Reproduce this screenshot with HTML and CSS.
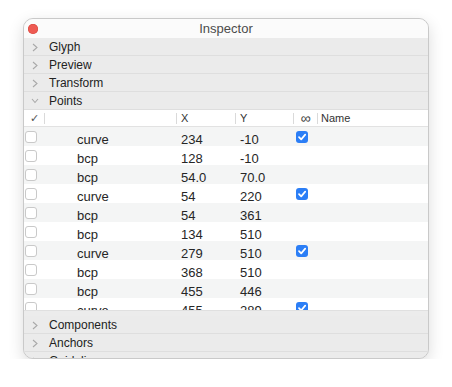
FILE: index.html
```html
<!DOCTYPE html>
<html lang="en">
<head>
    <meta charset="UTF-8">
    <meta name="viewport" content="width=device-width, initial-scale=1.0">
    <title>Inspector</title>
    <link rel="stylesheet" href="styles.css">
</head>
<body>
    <div class="window">
        <div class="titlebar">
            <span class="close"></span>
            <span class="title">Inspector</span>
        </div>

        <div class="section"><svg class="chev" viewBox="0 0 6 9"><polyline points="1,1 5,4.5 1,8"/></svg>Glyph</div>
        <div class="section"><svg class="chev" viewBox="0 0 6 9"><polyline points="1,1 5,4.5 1,8"/></svg>Preview</div>
        <div class="section"><svg class="chev" viewBox="0 0 6 9"><polyline points="1,1 5,4.5 1,8"/></svg>Transform</div>
        <div class="section"><svg class="chev down" viewBox="0 0 8 6"><polyline points="1,1 4,4.5 7,1"/></svg>Points</div>

        <div class="table">
            <div class="row head">
                <div class="cell mark">✓</div>
                <div class="cell"></div>
                <div class="cell">X</div>
                <div class="cell">Y</div>
                <div class="cell mark inf">∞</div>
                <div class="cell last">Name</div>
            </div>
            <div class="rows">
                <div class="row"><span class="box"></span><span class="type">curve</span><span>234</span><span>-10</span><span class="box on"></span><span></span></div>
                <div class="row"><span class="box"></span><span class="type">bcp</span><span>128</span><span>-10</span><span></span><span></span></div>
                <div class="row"><span class="box"></span><span class="type">bcp</span><span>54.0</span><span>70.0</span><span></span><span></span></div>
                <div class="row"><span class="box"></span><span class="type">curve</span><span>54</span><span>220</span><span class="box on"></span><span></span></div>
                <div class="row"><span class="box"></span><span class="type">bcp</span><span>54</span><span>361</span><span></span><span></span></div>
                <div class="row"><span class="box"></span><span class="type">bcp</span><span>134</span><span>510</span><span></span><span></span></div>
                <div class="row"><span class="box"></span><span class="type">curve</span><span>279</span><span>510</span><span class="box on"></span><span></span></div>
                <div class="row"><span class="box"></span><span class="type">bcp</span><span>368</span><span>510</span><span></span><span></span></div>
                <div class="row"><span class="box"></span><span class="type">bcp</span><span>455</span><span>446</span><span></span><span></span></div>
                <div class="row"><span class="box"></span><span class="type">curve</span><span>455</span><span>289</span><span class="box on"></span><span></span></div>
            </div>
        </div>
        <div class="split"></div>

        <div class="section"><svg class="chev" viewBox="0 0 6 9"><polyline points="1,1 5,4.5 1,8"/></svg>Components</div>
        <div class="section"><svg class="chev" viewBox="0 0 6 9"><polyline points="1,1 5,4.5 1,8"/></svg>Anchors</div>
        <div class="section"><svg class="chev" viewBox="0 0 6 9"><polyline points="1,1 5,4.5 1,8"/></svg>Guidelines</div>
    </div>
</body>
</html>
```

FILE: styles.css
```css
body {
    margin: 0;
    padding: 0;
    background-color: #ffffff;
    font-family: "Liberation Sans", Arial, sans-serif;
    color: #262626;
}
.window {
    margin: 18px 0 0 23px;
    width: 406px;
    height: 341px;
    box-sizing: border-box;
    border: 1px solid #c9c9c9;
    border-radius: 10px;
    overflow: hidden;
    background-color: #ececec;
    box-shadow: 0 5px 16px rgba(0,0,0,0.14);
    display: flex;
    flex-direction: column;
}
.titlebar {
    flex: 0 0 19px;
    display: grid;
    grid-template-columns: 20px 1fr 20px;
    align-items: center;
    background-color: #fbfbfb;
}
.close {
    width: 10px;
    height: 10px;
    margin-left: 4px;
    margin-top: 1px;
    border-radius: 50%;
    background-color: #ee5a52;
    box-shadow: inset 0 0 0 0.5px #d5443c;
}
.title {
    text-align: center;
    font-size: 13px;
    color: #4b4b4b;
}
.section {
    flex: 0 0 18px;
    box-sizing: border-box;
    display: flex;
    align-items: center;
    padding-left: 8px;
    padding-top: 1px;
    font-size: 12px;
    color: #222;
    background-color: #ebebeb;
    border-bottom: 1px solid #dedede;
}
.chev {
    width: 6px;
    height: 9px;
    margin-right: 11px;
    fill: none;
    stroke: #a9a9a9;
    stroke-width: 1.1;
}
.chev.down {
    width: 8px;
    height: 6px;
    margin-left: -1px;
    margin-right: 10px;
}
.table {
    flex: 0 0 200px;
    display: flex;
    flex-direction: column;
    background-color: #ffffff;
    overflow: hidden;
}
.row {
    display: grid;
    grid-template-columns: 21px 132px 59px 58px 24px 1fr;
    align-items: center;
    height: 19px;
    font-size: 13px;
}
.row.head {
    flex: 0 0 17px;
    height: 17px;
    box-sizing: border-box;
    border-bottom: 1px solid #e2e2e2;
    font-size: 11px;
    color: #333;
}
.head .cell {
    height: 11px;
    line-height: 11px;
    padding-left: 4px;
    border-right: 1px solid #dadada;
}
.head .mark {
    padding-left: 0;
    text-align: center;
    color: #555;
}
.head .inf {
    font-size: 14px;
    color: #444;
}
.head .last {
    border-right: none;
    padding-left: 3px;
}
.rows {
    flex: 1;
    overflow: hidden;
}
.rows .row:nth-child(odd) {
    background-color: #f4f5f5;
}
.rows .row span {
    padding-left: 4px;
    padding-top: 5px;
    line-height: 15px;
}
.rows .row .type {
    padding-left: 32px;
}
.box {
    width: 12px;
    height: 12px;
    box-sizing: border-box;
    margin-left: 1px;
    border: 1px solid #c9c9c9;
    border-radius: 3px;
    background-color: #ffffff;
}
.rows .row span.box {
    padding: 0;
}
.rows .row span.box.on {
    margin-left: 2px;
    border: none;
    background-color: #2b7ef6;
    background-image: url("data:image/svg+xml,%3Csvg xmlns='http://www.w3.org/2000/svg' viewBox='0 0 12 12'%3E%3Cpolyline points='3,6.2 5.2,8.4 9.2,3.6' fill='none' stroke='white' stroke-width='1.7' stroke-linecap='round' stroke-linejoin='round'/%3E%3C/svg%3E");
}
.split {
    flex: 0 0 5px;
    background-color: #ececec;
    border-top: 1px solid #e0e0e0;
}
```
